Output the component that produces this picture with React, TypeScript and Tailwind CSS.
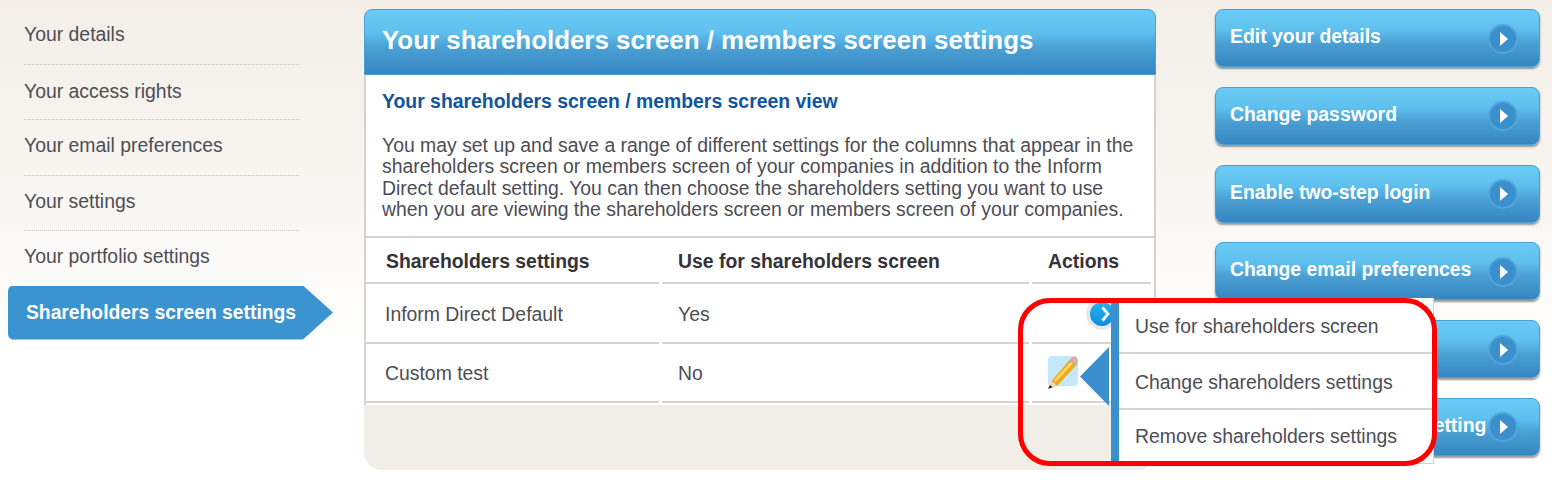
import { Fragment } from 'react'

const NAV = [
  { label: 'Your details', pad: 'pb-[5px]' },
  { label: 'Your access rights', pad: 'pb-[2px]' },
  { label: 'Your email preferences', pad: 'pb-[5px]' },
  { label: 'Your settings', pad: 'pb-[4px]' },
  { label: 'Your portfolio settings', pad: 'pb-[5px]' },
]

const BUTTONS = [
  'Edit your details',
  'Change password',
  'Enable two-step login',
  'Change email preferences',
  'Your portfolio settings',
  'Change your default setting',
]

const ROWS = [
  { name: 'Inform Direct Default', use: 'Yes', cell: 'h-[60px] pt-[3px]' },
  { name: 'Custom test', use: 'No', cell: 'h-[59px] pt-[2px]' },
]

const MENU = [
  { label: 'Use for shareholders screen', cell: 'border-b-2 border-[#d4d4d4] pt-[3px]' },
  { label: 'Change shareholders settings', cell: 'border-b-2 border-[#d4d4d4] pt-[3px]' },
  { label: 'Remove shareholders settings', cell: 'pb-[2px]' },
]

const GLOSS = 'bg-[linear-gradient(180deg,#6bcbf6_0%,#5fc0ee_35%,#4a9fd3_60%,#3686c2_100%)]'

function Pencil() {
  return (
    <svg width="32" height="34" viewBox="0 0 32 34" className="mb-[4px] block">
      <rect x="1" y="1" width="30" height="30" rx="4" fill="#c5e7fa" />
      <path d="M4.5 26 L23 4.5 L29.5 10 L10 31 Z" fill="#f2a91c" />
      <path d="M7 25 L24.5 6 L26.5 8 L8.5 27 Z" fill="#fcd662" />
      <path d="M23 4.5 L25.5 2 Q27 1 28.5 2 L30.5 4.5 Q31.5 6 30.5 7.5 L29.5 10 Z" fill="#eda6a0" />
      <path d="M22 5.5 L23.5 4 L30 9.5 L28.5 11.2 Z" fill="#b9b4a8" />
      <path d="M4.5 26 L10 31 L2.5 33.5 Z" fill="#ecd9b4" />
      <path d="M3 30 L5.5 32.5 L1 33.8 Z" fill="#1c1c1c" />
    </svg>
  )
}

export default function App() {
  return (
    <div className="relative flex h-[487px] w-[1552px] overflow-hidden bg-[linear-gradient(180deg,#f3efe8_0%,#f8f6f2_40%,#ffffff_72%)] font-['Liberation_Sans',Arial,sans-serif] text-[#4d4d55]">
      {/* Left nav */}
      <aside className="w-[364px] shrink-0 pt-[9px]">
        <ul className="ml-6 w-[275px] text-[19.4px] leading-[24px]">
          {NAV.map(item => (
            <li key={item.label} className={`flex h-[55.5px] items-center border-b border-dotted border-[#c9c6bf] ${item.pad}`}>
              {item.label}
            </li>
          ))}
        </ul>
        <div className="-mt-px ml-2 flex h-[54px] w-[325px] items-center bg-[#3b93d0] pt-[2px] pl-[18px] text-[19.3px] font-bold text-white [clip-path:polygon(0_5px,1px_2px,4px_0,295px_0,100%_50%,295px_100%,4px_100%,1px_calc(100%-2px),0_calc(100%-5px))]">
          Shareholders screen settings
        </div>
      </aside>

      {/* Main panel */}
      <main className="mt-[9px] flex h-[461px] w-[792px] shrink-0 flex-col rounded-b-[18px] bg-[#f1eee7]">
        <h1 className={`flex h-[66px] shrink-0 items-center rounded-t-[8px] border border-[#4a9fd3] pb-[4px] pl-[17px] text-[25.9px] font-bold text-white ${GLOSS}`}>
          Your shareholders screen / members screen settings
        </h1>
        <div className="h-[330px] shrink-0 border-x-2 border-[#d4d4d4] bg-white">
          <div className="h-[161px] px-4 pt-[14px]">
            <h2 className="text-[19.4px] leading-[24px] font-bold text-[#0f559f]">Your shareholders screen / members screen view</h2>
            <p className="mt-[22px] text-[19.4px] leading-[21.4px]">
              You may set up and save a range of different settings for the columns that appear in the shareholders screen or members screen of your companies in addition to the Inform Direct default setting. You can then choose the shareholders setting you want to use when you are viewing the shareholders screen or members screen of your companies.
            </p>
          </div>
          <div className="grid grid-cols-[293px_367px_119px] gap-x-[3px] border-t-2 border-[#d4d4d4] pr-[2px]">
            <div className="flex h-[46px] items-center border-b-2 border-[#d4d4d4] pt-[4px] pl-5 text-[19.4px] font-bold text-[#333339]">Shareholders settings</div>
            <div className="flex h-[46px] items-center border-b-2 border-[#d4d4d4] pt-[4px] pl-4 text-[19.4px] font-bold text-[#333339]">Use for shareholders screen</div>
            <div className="flex h-[46px] items-center border-b-2 border-[#d4d4d4] pt-[4px] pl-4 text-[19.4px] font-bold text-[#333339]">Actions</div>
            {ROWS.map(row => (
              <Fragment key={row.name}>
                <div className={`flex items-center border-b-2 border-[#d4d4d4] pl-[19px] text-[19.4px] ${row.cell}`}>{row.name}</div>
                <div className={`flex items-center border-b-2 border-[#d4d4d4] pl-4 text-[19.4px] ${row.cell}`}>{row.use}</div>
                <div className={`flex items-center border-b-2 border-[#d4d4d4] pl-[15px] ${row.cell}`}>
                  {row.use === 'No' && <Pencil />}
                </div>
              </Fragment>
            ))}
          </div>
        </div>
      </main>

      {/* Right buttons */}
      <nav className="mt-[9px] ml-[59px] flex w-[325px] shrink-0 flex-col gap-[19.8px]">
        {BUTTONS.map(label => (
          <a key={label} className={`flex h-[58px] items-center justify-between rounded-[8px] border border-[#4a9fd3] pr-[21px] pb-[3px] pl-[14px] text-[19.4px] font-bold whitespace-nowrap text-white shadow-[0_2px_2px_rgba(70,70,70,0.55)] ${GLOSS}`}>
            {label}
            <span className="flex size-[30px] shrink-0 translate-y-[2px] items-center justify-center rounded-full border-2 border-[#4ea7dc] bg-[#3b8fcd]">
              <span className="ml-[2px] border-y-[7px] border-l-[8px] border-y-transparent border-l-white" />
            </span>
          </a>
        ))}
      </nav>

      {/* Popup menu */}
      <div className="absolute top-[298px] left-[1086px] flex size-[32px] items-center justify-center rounded-full border-4 border-[#e8e8e8] bg-[linear-gradient(180deg,#25b1f0,#0f8fd8)]">
        <svg width="9" height="16" viewBox="0 0 9 16" className="ml-[7px]">
          <path d="M1.5 1.5 L7 8 L1.5 14.5" fill="none" stroke="#ffffff" strokeWidth="2.8" />
        </svg>
      </div>
      <div className="absolute top-[347px] left-[1080px] h-[59px] w-[29px] bg-[#3b8fcd] [clip-path:polygon(0_50%,100%_0,100%_100%)]" />
      <ul className="absolute top-[298px] left-[1111px] h-[166px] w-[323px] border-r border-b border-[#cfcfcf] border-l-8 border-l-[#3b8fcd] bg-white text-[19.4px]">
        {MENU.map(item => (
          <li key={item.label} className={`flex h-[56px] items-center pl-4 ${item.cell}`}>
            {item.label}
          </li>
        ))}
      </ul>

      {/* Red annotation */}
      <div className="pointer-events-none absolute top-[298px] left-[1018px] h-[168px] w-[419px] rounded-[32px] border-[5px] border-[#ff0000]" />
    </div>
  )
}
